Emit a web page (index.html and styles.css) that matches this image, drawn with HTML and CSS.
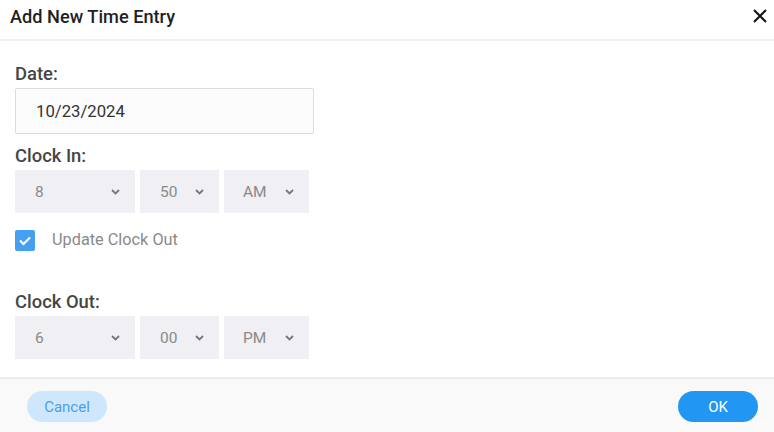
FILE: index.html
```html
<!DOCTYPE html>
<html lang="en">
<head>
<meta charset="utf-8">
<title>Add New Time Entry</title>
<link rel="stylesheet" href="styles.css">
</head>
<body>
<div class="dialog">
  <div class="header">
    <h1 class="title">Add New Time Entry</h1>
    <svg class="close" width="14" height="14" viewBox="0 0 14 14"><path d="M1 1 L13 13 M13 1 L1 13" stroke="#111" stroke-width="2" fill="none"/></svg>
  </div>
  <div class="content">
    <div class="label">Date:</div>
    <div class="input">10/23/2024</div>

    <div class="label gap-top">Clock In:</div>
    <div class="select-row">
      <div class="select w-hour"><span>8</span><svg width="9" height="6" viewBox="0 0 9 6"><path d="M1 1 L4.5 4.5 L8 1" stroke="#777" stroke-width="1.8" fill="none"/></svg></div>
      <div class="select w-min"><span>50</span><svg width="9" height="6" viewBox="0 0 9 6"><path d="M1 1 L4.5 4.5 L8 1" stroke="#777" stroke-width="1.8" fill="none"/></svg></div>
      <div class="select w-ampm"><span>AM</span><svg width="9" height="6" viewBox="0 0 9 6"><path d="M1 1 L4.5 4.5 L8 1" stroke="#777" stroke-width="1.8" fill="none"/></svg></div>
    </div>

    <div class="check-row">
      <span class="checkbox"><svg width="20" height="21" viewBox="0 0 20 21"><path d="M5 10.5 L8.5 14 L15 7.5" stroke="#fff" stroke-width="2.2" fill="none"/></svg></span>
      <span class="check-label">Update Clock Out</span>
    </div>

    <div class="label out-top">Clock Out:</div>
    <div class="select-row">
      <div class="select w-hour"><span>6</span><svg width="9" height="6" viewBox="0 0 9 6"><path d="M1 1 L4.5 4.5 L8 1" stroke="#777" stroke-width="1.8" fill="none"/></svg></div>
      <div class="select w-min"><span>00</span><svg width="9" height="6" viewBox="0 0 9 6"><path d="M1 1 L4.5 4.5 L8 1" stroke="#777" stroke-width="1.8" fill="none"/></svg></div>
      <div class="select w-ampm"><span>PM</span><svg width="9" height="6" viewBox="0 0 9 6"><path d="M1 1 L4.5 4.5 L8 1" stroke="#777" stroke-width="1.8" fill="none"/></svg></div>
    </div>
  </div>
  <div class="footer">
    <button class="btn btn-cancel">Cancel</button>
    <button class="btn btn-ok">OK</button>
  </div>
</div>
</body>
</html>
```

FILE: styles.css
```css
html, body {
  margin: 0;
  padding: 0;
  background: #fff;
}
body {
  font-family: Roboto, "Liberation Sans", sans-serif;
}
.dialog {
  width: 774px;
  height: 432px;
  display: flex;
  flex-direction: column;
  background: #fff;
}
.header {
  border-bottom: 2px solid #f0f0f0;
  display: flex;
  justify-content: space-between;
  align-items: flex-start;
  padding: 6px 7px 0 10px;
  box-sizing: border-box;
  height: 41px;
}
.title {
  margin: 0;
  font-size: 18.2px;
  line-height: 21px;
  font-weight: 500;
  color: #1f1f1f;
}
.close {
  margin-top: 3px;
}
.content {
  padding: 23px 15px 0;
  display: flex;
  flex-direction: column;
  align-items: flex-start;
}
.label {
  font-size: 18.4px;
  line-height: 20px;
  font-weight: 500;
  color: #454545;
  margin-bottom: 4px;
}
.gap-top {
  margin-top: 12px;
}
.out-top {
  margin-top: 41px;
}
.input {
  width: 299px;
  height: 46px;
  box-sizing: border-box;
  border: 1px solid #dcdcdc;
  border-radius: 2px;
  background: #fcfcfc;
  padding-left: 20px;
  display: flex;
  align-items: center;
  font-size: 16.7px;
  color: #333;
}
.select-row {
  display: flex;
  gap: 5px;
}
.select {
  height: 43px;
  background: #efeff4;
  display: flex;
  align-items: center;
  justify-content: space-between;
  box-sizing: border-box;
  padding: 0 15px 0 20px;
  font-size: 15.5px;
  color: #8a8a8a;
}
.w-hour { width: 120px; }
.w-min { width: 79px; }
.w-ampm { width: 85px; padding-left: 19px; }
.check-row {
  margin-top: 17px;
  display: flex;
  align-items: center;
  height: 21px;
}
.checkbox {
  width: 20px;
  height: 21px;
  border-radius: 2px;
  background: #45a0f2;
  display: block;
}
.checkbox svg {
  display: block;
}
.check-label {
  margin-left: 17px;
  font-size: 16.3px;
  color: #8a8a8a;
  position: relative;
  top: -1px;
}
.footer {
  margin-top: auto;
  height: 55px;
  box-sizing: border-box;
  border-top: 2px solid #ececec;
  background: #f9f9f9;
  display: flex;
  justify-content: space-between;
  align-items: flex-start;
  padding: 12px 16px 0 27px;
}
.btn {
  width: 80px;
  height: 31px;
  border: none;
  border-radius: 16px;
  font-family: Roboto, "Liberation Sans", sans-serif;
  font-size: 15px;
  padding: 0;
}
.btn-cancel {
  background: #cfe7fc;
  color: #4a9fe8;
}
.btn-ok {
  background: #2196f3;
  color: #fff;
}
```
